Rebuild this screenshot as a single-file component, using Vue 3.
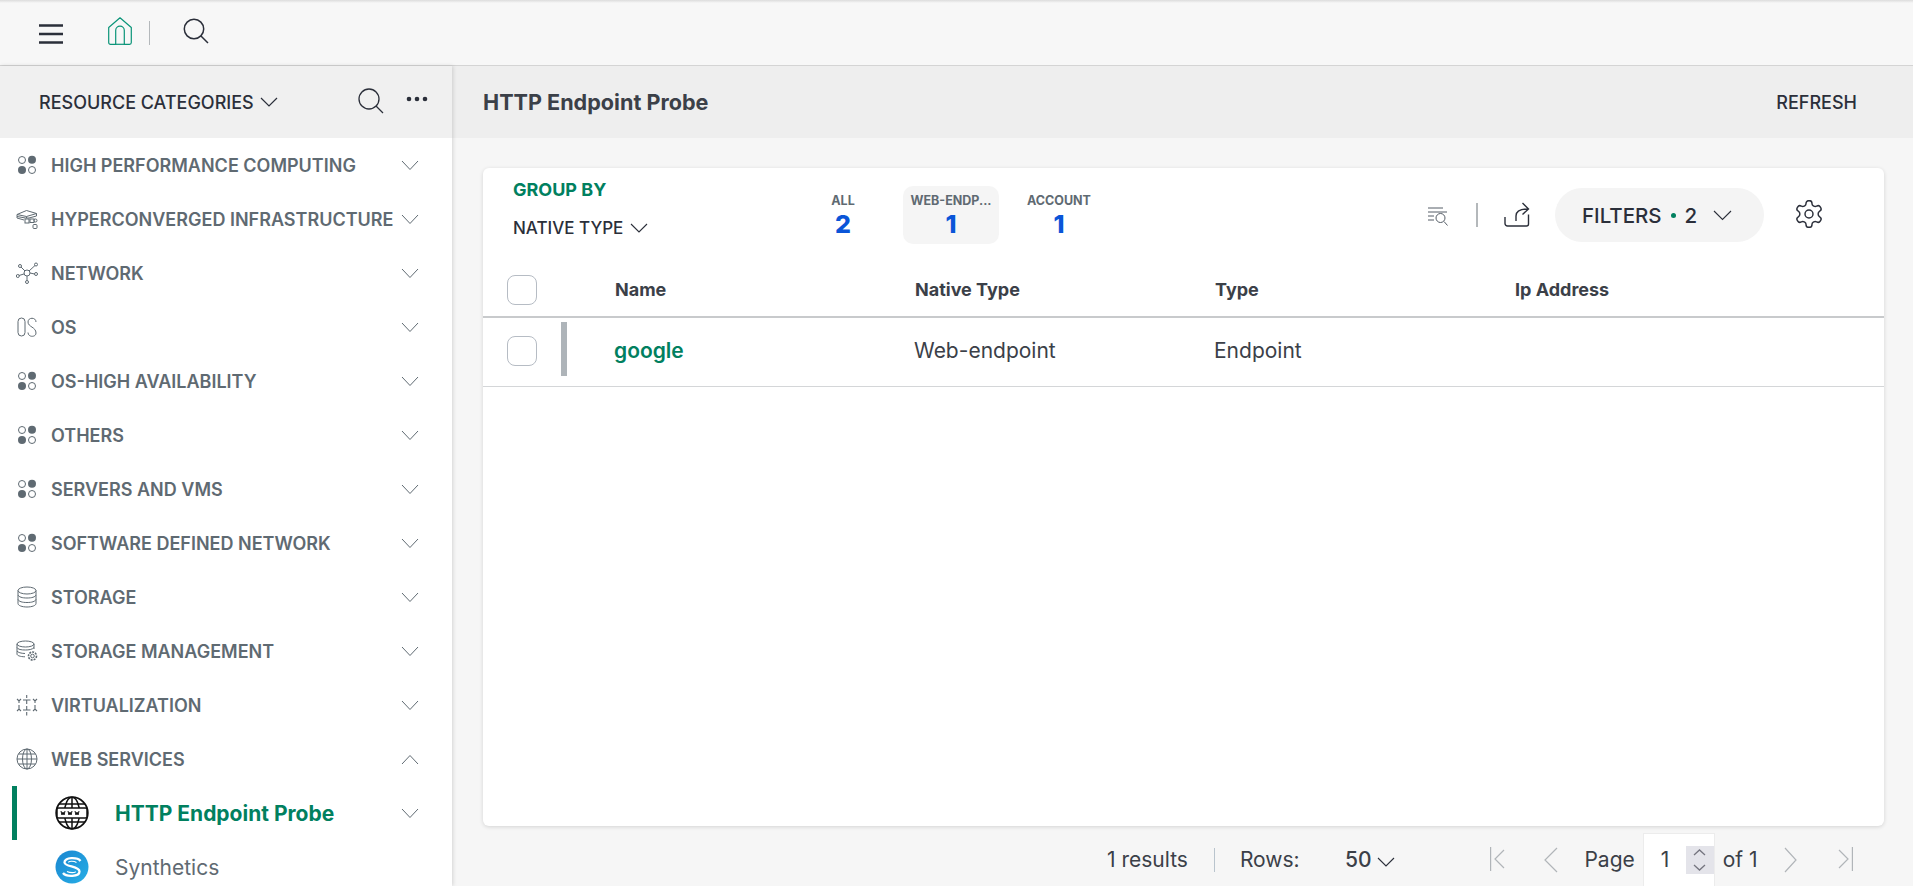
<script setup>
const cats = [
  { name: 'HIGH PERFORMANCE COMPUTING', icon: 'dots' },
  { name: 'HYPERCONVERGED INFRASTRUCTURE', icon: 'hci' },
  { name: 'NETWORK', icon: 'net' },
  { name: 'OS', icon: 'os' },
  { name: 'OS-HIGH AVAILABILITY', icon: 'dots' },
  { name: 'OTHERS', icon: 'dots' },
  { name: 'SERVERS AND VMS', icon: 'dots' },
  { name: 'SOFTWARE DEFINED NETWORK', icon: 'dots' },
  { name: 'STORAGE', icon: 'db' },
  { name: 'STORAGE MANAGEMENT', icon: 'dbgear' },
  { name: 'VIRTUALIZATION', icon: 'virt' },
  { name: 'WEB SERVICES', icon: 'globe', open: true }
]
const tabs = [
  { label: 'ALL', n: 2 },
  { label: 'WEB-ENDP...', n: 1, active: true },
  { label: 'ACCOUNT', n: 1 }
]
const cols = ['Name', 'Native Type', 'Type', 'Ip Address']
</script>

<template>
  <div class="page">
    <header class="topbar">
      <svg class="burger" width="24" height="22" viewBox="0 0 24 22"><path d="M0 2.500h24M0 11h24M0 19.500h24" stroke="#2b2f3a" stroke-width="2.400" /></svg>
      <svg class="home" width="24" height="28" viewBox="0 0 24 28" fill="none"><path d="M.7 10.500 12 .8l11.300 9.700v15a1.800 1.800 0 0 1-1.800 1.800h-5.200V13.500a4.300 4.300 0 0 0-8.600 0v13.800H2.500a1.800 1.800 0 0 1-1.800-1.800z" stroke="#0a9478" stroke-width="1.200" stroke-linejoin="round" /><path d="M7.700 27.300h8.600" stroke="#0a9478" stroke-width="1.200" /></svg>
      <span class="topdiv"></span>
      <svg class="topsearch" width="26" height="26" viewBox="0 0 26 26" fill="none"><circle cx="11" cy="11" r="9.700" stroke="#2b2f3a" stroke-width="1.500" /><path d="m18 18 7 7" stroke="#2b2f3a" stroke-width="1.500" /></svg>
    </header>

    <div class="body">
      <aside class="side">
        <div class="side-head">
          <span class="side-title">RESOURCE CATEGORIES</span>
          <svg class="chev-head" width="18" height="10" viewBox="0 0 18 10" fill="none"><path d="m1 1 8 8 8-8" stroke="#2b2f3a" stroke-width="1.200" /></svg>
          <svg class="head-search" width="26" height="26" viewBox="0 0 26 26" fill="none"><circle cx="11" cy="11" r="10" stroke="#2b2f3a" stroke-width="1.300" /><path d="m18 18 7 7" stroke="#2b2f3a" stroke-width="1.300" /></svg>
          <svg class="head-more" width="22" height="6" viewBox="0 0 22 6"><circle cx="3" cy="3" r="2.300" fill="#2b2f3a" /><circle cx="11" cy="3" r="2.300" fill="#2b2f3a" /><circle cx="19" cy="3" r="2.300" fill="#2b2f3a" /></svg>
        </div>

        <div class="side-list">
          <div v-for="c in cats" :key="c.name" class="cat">
            <svg class="cat-icon" width="22" height="22" viewBox="0 0 22 22" fill="none" stroke="#5f6a72" stroke-width="1">
              <template v-if="c.icon === 'dots'">
                <circle cx="6" cy="6" r="3.500" /><circle cx="16" cy="5.700" r="4" fill="#5f6a72" stroke="none" /><circle cx="6" cy="16" r="4" fill="#5f6a72" stroke="none" /><circle cx="16" cy="16" r="3.500" />
              </template>
              <template v-else-if="c.icon === 'hci'">
                <path d="M1 6.500 10.500 2.500 20.500 5.500v2.500L13 10H9.500L1 8.500zM1 6.500l9.500 2 10-3M10.500 8.500v1.500M1 8.500v1.500l7 2" />
                <rect x="9" y="11" width="4" height="4" /><rect x="14" y="11" width="4" height="3.500" /><circle cx="19.500" cy="12.500" r="1.500" /><rect x="17" y="16.500" width="4" height="4" rx="1" />
              </template>
              <template v-else-if="c.icon === 'net'">
                <circle cx="11" cy="11" r="3" /><circle cx="4" cy="4" r="1.500" /><circle cx="20" cy="2.500" r="1.500" /><circle cx="1.800" cy="14" r="1.500" /><circle cx="20" cy="12" r="1.500" /><circle cx="11" cy="20" r="1.500" />
                <path d="m5 5 4 4M19 3.500 13 9M3 13.500l5.200-1.600M18.500 12 14 11M11 14v4.500" />
              </template>
              <template v-else-if="c.icon === 'os'">
                <rect x="2" y="2" width="7" height="18" rx="3.500" /><path d="M20 6c0-5-8-5-8 0 0 5 8 5 8 11 0 4.500-8 4.500-8-.5" />
              </template>
              <template v-else-if="c.icon === 'db'">
                <ellipse cx="11" cy="4.500" rx="9" ry="3.500" /><path d="M2 4.500v13c0 2 4 3.500 9 3.500s9-1.500 9-3.500v-13M2 9c1 2 4 3 9 3s8-1 9-3M2 13.500c1 2 4 3 9 3s8-1 9-3" />
              </template>
              <template v-else-if="c.icon === 'dbgear'">
                <ellipse cx="9.500" cy="4" rx="8.500" ry="3" /><path d="M1 4v10c0 1.500 3 2.700 8 2.800M18 4v5M1 7.500c1 2 4 2.500 8.500 2.500 3 0 7-.5 8.500-2.500M1 11c1 1.500 4 2.400 8 2.500" />
                <circle cx="16.500" cy="16" r="1.800" /><circle cx="16.500" cy="16" r="4" stroke-dasharray="2 1" stroke-width="1.600" />
              </template>
              <template v-else-if="c.icon === 'virt'">
                <path d="M10.700 1v3M10.700 6v4M10.700 12v4M10.700 18v3.500M7 6h7.500M7 16h7.500M1 5l2 2 2-2M3 7v2M3 11v4M1 17l2-2 2 2M17 5l2 2 2-2M19 7v2M19 11v4M17 17l2-2 2 2" stroke-width="1.100" />
              </template>
              <template v-else>
                <circle cx="11" cy="11" r="10" /><ellipse cx="11" cy="11" rx="4.500" ry="10" /><path d="M1 11h20M11 1v20M2.500 6h17M2.500 16h17" />
              </template>
            </svg>
            <span class="cat-name">{{ c.name }}</span>
            <svg class="cat-chev" width="18" height="11" viewBox="0 0 18 11" fill="none"><path :d="c.open ? 'm1 10 8-8.500 8 8.500' : 'm1 1 8 8.500 8-8.500'" stroke="#5f6a72" stroke-width="1" /></svg>
          </div>

          <div class="sub active">
            <svg class="sub-icon" width="34" height="34" viewBox="0 0 34 34" fill="none" stroke="#111" stroke-width="1.500">
              <circle cx="17" cy="17" r="15.800" stroke-width="1.800" /><ellipse cx="17" cy="17" rx="7.500" ry="15.800" /><path d="M17 1v32M4 8h26M4 26h26" />
              <rect x="2" y="12" width="30" height="10" rx="1.500" fill="#fff" /><path d="M6 15l1 4 1-3 1 3 1-4M13 15l1 4 1-3 1 3 1-4M20 15l1 4 1-3 1 3 1-4" stroke-width="1" />
            </svg>
            <span class="sub-name">HTTP Endpoint Probe</span>
            <svg class="cat-chev" width="18" height="11" viewBox="0 0 18 11" fill="none"><path d="m1 1 8 8.500 8-8.500" stroke="#5f6a72" stroke-width="1" /></svg>
          </div>
          <div class="sub">
            <svg class="sub-icon" width="34" height="34" viewBox="0 0 34 34" fill="none">
              <defs><linearGradient id="syn" x1="0" y1="0" x2="1" y2="1"><stop offset="0" stop-color="#1a86d0" /><stop offset="1" stop-color="#27aee6" /></linearGradient></defs>
              <circle cx="17" cy="17" r="16.500" fill="url(#syn)" /><path d="M25.500 11C22.500 7 9 7 9.500 12.500 10 17 24.500 16 24.500 21.500 24.500 27 11 27 8 23" stroke="#fff" stroke-width="2.300" /><path d="M21.500 12.500C18.500 10.500 13.500 11 13.500 12.500M12 21.500C15 23 20.500 23 20.500 21.500" stroke="#fff" stroke-width="1.100" />
            </svg>
            <span class="sub-name">Synthetics</span>
          </div>
        </div>
      </aside>

      <main class="main">
        <div class="main-head">
          <span class="main-title">HTTP Endpoint Probe</span>
          <span class="refresh">REFRESH</span>
        </div>

        <div class="content">
          <section class="card">
            <div class="card-top">
              <div class="group">
                <div class="group-label">GROUP BY</div>
                <div class="group-val">NATIVE TYPE
                  <svg width="18" height="10" viewBox="0 0 18 10" fill="none"><path d="m1 1 8 8 8-8" stroke="#2b2f3a" stroke-width="1.100" /></svg>
                </div>
              </div>
              <div class="tabs">
                <div v-for="t in tabs" :key="t.label" class="tab" :class="{ on: t.active }">
                  <span class="tab-label">{{ t.label }}</span>
                  <span class="tab-num">{{ t.n }}</span>
                </div>
              </div>
              <div class="tools">
                <svg class="t-search" width="20" height="19" viewBox="0 0 20 19" fill="none" stroke="#555d66"><path d="M0 1h15M0 5h19M0 9h6M0 13h6" /><circle cx="12.500" cy="11" r="4.500" /><path d="m16 14.500 3.500 4" /></svg>
                <span class="t-div"></span>
                <svg class="t-share" width="26" height="25" viewBox="0 0 26 25" fill="none" stroke="#2b2f3a" stroke-width="1.400"><path d="M1 15v6.500A2.500 2.500 0 0 0 3.500 24h19a2 2 0 0 0 2-2v-9.500" /><path d="M12 19v-5c0-4.500 4-7 12-7M18.500 1l6 6-6 5.500" /></svg>
                <div class="pill">
                  <span class="pill-text">FILTERS</span>
                  <span class="pill-dot"></span>
                  <span class="pill-text">2</span>
                  <svg class="pill-chev" width="19" height="11" viewBox="0 0 19 11" fill="none"><path d="m1 1 8.500 8.500L18 1" stroke="#2b2f3a" stroke-width="1.100" /></svg>
                </div>
                <svg class="t-gear" width="28" height="28" viewBox="1.500 1.500 21 21" fill="none" stroke="#2b2f3a" stroke-width="1.100" stroke-linejoin="round"><path d="M12.220 2h-.44a2 2 0 0 0-2 2v.18a2 2 0 0 1-1 1.730l-.43.250a2 2 0 0 1-2 0l-.15-.08a2 2 0 0 0-2.730.730l-.22.380a2 2 0 0 0 .730 2.730l.15.100a2 2 0 0 1 1 1.720v.510a2 2 0 0 1-1 1.740l-.15.090a2 2 0 0 0-.730 2.730l.22.380a2 2 0 0 0 2.730.730l.15-.08a2 2 0 0 1 2 0l.43.250a2 2 0 0 1 1 1.730V20a2 2 0 0 0 2 2h.44a2 2 0 0 0 2-2v-.18a2 2 0 0 1 1-1.730l.43-.25a2 2 0 0 1 2 0l.15.080a2 2 0 0 0 2.730-.73l.22-.39a2 2 0 0 0-.73-2.730l-.15-.08a2 2 0 0 1-1-1.740v-.5a2 2 0 0 1 1-1.740l.15-.09a2 2 0 0 0 .73-2.730l-.22-.38a2 2 0 0 0-2.730-.73l-.15.08a2 2 0 0 1-2 0l-.43-.25a2 2 0 0 1-1-1.730V4a2 2 0 0 0-2-2z" /><circle cx="12" cy="12" r="3" /></svg>
              </div>
            </div>

            <div class="t-head">
              <span class="check"></span>
              <span class="mark-space"></span>
              <span v-for="c in cols" :key="c" class="col">{{ c }}</span>
            </div>
            <div class="t-row">
              <span class="check"></span>
              <span class="mark"></span>
              <span class="col link">google</span>
              <span class="col">Web-endpoint</span>
              <span class="col">Endpoint</span>
              <span class="col"></span>
            </div>
          </section>

          <footer class="pager">
            <span>1 results</span>
            <span class="p-div"></span>
            <span class="p-rows">Rows:</span>
            <span class="p-size">50</span>
            <svg class="p-chev" width="18" height="10" viewBox="0 0 18 10" fill="none"><path d="m1 1 8 8 8-8" stroke="#2b2f3a" stroke-width="1.100" /></svg>
            <svg class="p-first" width="15" height="24" viewBox="0 0 15 24" fill="none" stroke="#b1b5b9" stroke-width="1.200"><path d="M.6 0v24M14 3 5 12l9 9" /></svg>
            <svg class="p-prev" width="14" height="26" viewBox="0 0 14 26" fill="none" stroke="#b1b5b9" stroke-width="1.200"><path d="M13 1 1 13l12 12" /></svg>
            <span class="p-page">Page</span>
            <div class="p-input">
              <span>1</span>
              <span class="spin">
                <svg width="13" height="24" viewBox="0 0 13 24" fill="none" stroke="#75757f" stroke-width="1.300"><path d="m1 7 5.500-5L12 7M1 17l5.500 5 5.500-5" /></svg>
              </span>
            </div>
            <span class="p-of">of 1</span>
            <svg class="p-next" width="13" height="26" viewBox="0 0 13 26" fill="none" stroke="#b1b5b9" stroke-width="1.200"><path d="m1 1 11 12L1 25" /></svg>
            <svg class="p-last" width="15" height="24" viewBox="0 0 15 24" fill="none" stroke="#b1b5b9" stroke-width="1.200"><path d="M14.400 0v24M1 3l9 9-9 9" /></svg>
          </footer>
        </div>
      </main>
    </div>
  </div>
</template>

<style>
html, body { margin: 0; overflow: hidden; }
</style>

<style scoped>
.page {
  width: 1913px;
  height: 886px;
  display: flex;
  flex-direction: column;
  overflow: hidden;
  font-family: Inter, "Noto Sans", sans-serif;
  color: #2b2f3a;
  background: #f6f6f6;
}
.topbar {
  flex: none;
  box-sizing: border-box;
  height: 66px;
  display: flex;
  align-items: center;
  background: linear-gradient(#dcdcdc, #f7f7f7 3px);
  border-bottom: 1px solid #d4d4d4;
  padding-left: 39px;
}
.burger { margin-top: 2px; }
.home { margin-left: 45px; margin-top: -4px; }
.topdiv { width: 1px; height: 24px; background: #b4b8bb; margin: 1px 0 0 17px; }
.topsearch { margin-left: 33px; margin-top: -3px; }
.body { flex: 1; display: flex; min-height: 0; }
.side {
  flex: none;
  width: 452px;
  background: #fff;
  box-shadow: 1px 0 4px rgba(0, 0, 0, .14);
  z-index: 1;
  display: flex;
  flex-direction: column;
}
.side-head {
  flex: none;
  height: 72px;
  display: flex;
  align-items: center;
  background: #f0f0f0;
  padding-left: 39px;
}
.side-title { font-size: 18px; font-weight: 500; white-space: nowrap; }
.chev-head { margin-left: 6px; }
.head-search { flex: none; margin-left: 80px; margin-top: -2px; }
.head-more { flex: none; margin-left: 22px; margin-top: -6px; }
.cat {
  height: 54px;
  display: flex;
  align-items: center;
  padding-left: 16px;
}
.cat-icon { flex: none; margin-right: 13px; }
.cat-name { font-size: 18px; font-weight: 600; color: #5f6a72; white-space: nowrap; width: 350px; }
.cat-chev { flex: none; }
.sub {
  height: 54px;
  display: flex;
  align-items: center;
  margin-left: 12px;
  padding-left: 38px;
  border-left: 5px solid transparent;
}
.sub.active { border-left-color: #01805f; }
.sub-icon { flex: none; margin-right: 26px; }
.sub-name { font-size: 21px; color: #5f6a72; width: 286px; white-space: nowrap; }
.active .sub-name { color: #01805f; font-weight: 700; }
.main { flex: 1; min-width: 0; display: flex; flex-direction: column; }
.main-head {
  flex: none;
  height: 72px;
  display: flex;
  align-items: center;
  justify-content: space-between;
  padding: 0 56px 0 31px;
  background: #eee;
}
.main-title { font-size: 21.600px; font-weight: 700; color: #3b4048; }
.refresh { font-size: 18px; font-weight: 500; }
.content { flex: 1; min-height: 0; padding: 30px 29px 0 31px; display: flex; flex-direction: column; }
.card {
  flex: none;
  height: 658px;
  background: #fff;
  border-radius: 6px;
  box-shadow: 0 1px 4px rgba(0, 0, 0, .14);
}
.card-top { height: 104px; display: flex; }
.group { padding: 11px 0 0 30px; width: 312px; box-sizing: border-box; flex: none; }
.group-label { font-size: 18px; line-height: 22px; font-weight: 700; color: #01805f; }
.group-val { font-size: 17px; line-height: 22px; font-weight: 500; margin-top: 16px; display: flex; align-items: center; gap: 7px; }
.tabs { display: flex; gap: 12px; padding-top: 18px; align-items: flex-start; }
.tab {
  width: 96px;
  height: 58px;
  border-radius: 10px;
  display: flex;
  flex-direction: column;
  align-items: center;
  padding-top: 7px;
  box-sizing: border-box;
}
.tab.on { background: #f5f5f5; }
.tab-label { font-size: 12.500px; font-weight: 700; color: #5f6a72; white-space: nowrap; }
.tab-num { font-size: 25px; font-weight: 800; color: #0a55d8; line-height: 32px; }
.tools { margin-left: auto; display: flex; align-items: flex-start; padding-top: 20px; padding-right: 61px; }
.t-search { margin-top: 19px; }
.t-div { width: 2px; height: 24px; background: #b4b8bb; margin: 15px 26px 0 28px; }
.t-share { margin-top: 14px; }
.pill {
  height: 54px;
  width: 209px;
  box-sizing: border-box;
  margin-left: 25px;
  border-radius: 27px;
  background: #f4f4f4;
  display: flex;
  align-items: center;
  padding-left: 27px;
}
.pill-text { font-size: 20.500px; font-weight: 500; }
.pill-dot { width: 5px; height: 5px; border-radius: 50%; background: #01805f; margin: 0 9px; }
.pill-chev { margin-left: 16px; }
.t-gear { margin: 12px 0 0 31px; }
.t-head, .t-row { display: flex; align-items: center; box-sizing: border-box; padding-left: 24px; }
.t-head { height: 46px; border-bottom: 2px solid #c8cacc; padding-bottom: 9px; }
.t-row { height: 69px; border-bottom: 1px solid #d4d6d8; padding-bottom: 3px; }
.check {
  flex: none;
  width: 30px;
  height: 30px;
  box-sizing: border-box;
  border: 1px solid #b6bcc4;
  border-radius: 8px;
  background: #fff;
}
.mark-space { flex: none; width: 78px; }
.mark { flex: none; width: 6px; height: 54px; background: #aeb4b9; margin: 0 47px 4px 24px; }
.col { flex: none; width: 300px; font-size: 18px; font-weight: 700; color: #3b4048; }
.t-row .col { font-size: 21px; font-weight: 400; }
.t-row .col.link { font-weight: 600; color: #01805f; }
.pager {
  flex: 1;
  display: flex;
  align-items: flex-start;
  font-size: 21px;
  color: #3b4048;
  padding: 20px 0 0 624px;
  white-space: nowrap;
}
.pager > span { line-height: 28px; }
.pager > svg { margin-top: 1px; flex: none; }
.p-div { width: 1px; height: 24px; background: #b9c4cd; margin: 2px 25px 0 26px; }
.p-rows { width: 105px; }
.p-size { font-weight: 500; }
.pager > .p-chev { margin: 11px 0 0 6px; }
.pager > .p-first { margin-left: 95px; }
.pager > .p-prev { margin-left: 39px; }
.p-page { margin-left: 26px; }
.p-input {
  flex: none;
  width: 72px;
  height: 60px;
  margin: -13px 0 0 8px;
  box-sizing: border-box;
  background: #fff;
  border: 1px solid #ececec;
  display: flex;
  padding-top: 12px;
  position: relative;
}
.p-input > span:first-child { padding-left: 17px; line-height: 28px; }
.spin {
  position: absolute;
  right: 0;
  top: 12px;
  width: 28px;
  height: 28px;
  background: #e4e4ea;
  display: flex;
  align-items: center;
  justify-content: center;
}
.p-of { margin-left: 8px; }
.pager > .p-next { margin-left: 26px; }
.pager > .p-last { margin-left: 41px; }
</style>
